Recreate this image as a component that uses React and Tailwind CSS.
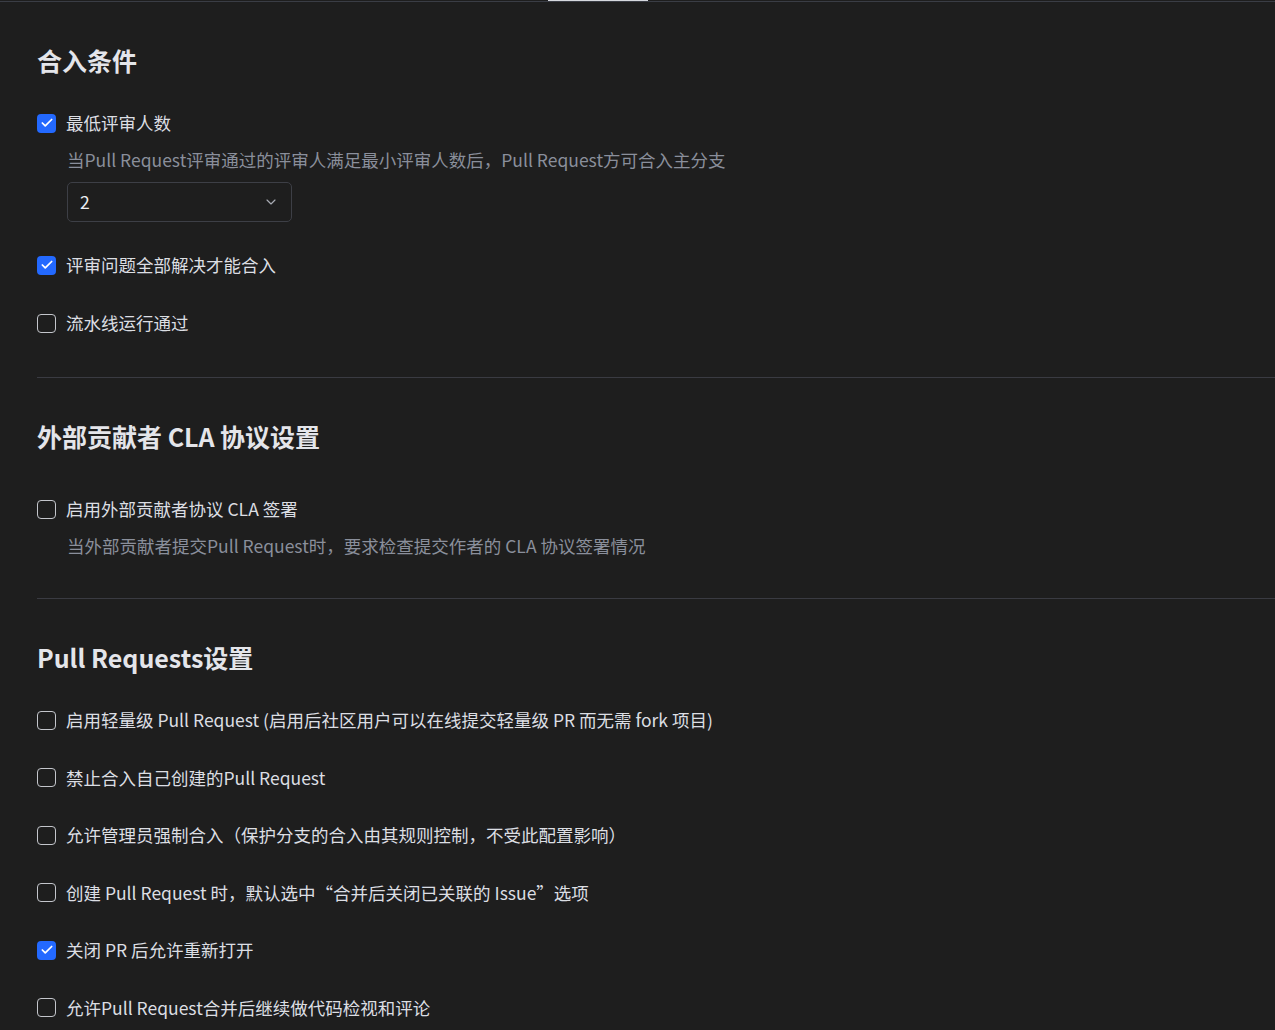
import { Check, ChevronDown } from 'lucide-react';

const font = { fontFamily: '"Noto Sans CJK SC", "Noto Sans", sans-serif' };

function Box({ checked }) {
  if (checked) {
    return (
      <span className="w-[19px] h-[19px] rounded-[4px] bg-[#2369ff] flex items-center justify-center shrink-0">
        <Check className="w-[14px] h-[14px] text-white" strokeWidth={3} />
      </span>
    );
  }
  return <span className="w-[19px] h-[19px] rounded-[4px] border-[1.5px] border-[#c4c6cc] shrink-0" />;
}

function Row({ checked, label, className = '' }) {
  return (
    <div className={`flex items-center gap-[10px] h-[26px] ${className}`}>
      <Box checked={checked} />
      <span className="text-[17.5px] leading-[26px] text-[#dcdee3]">{label}</span>
    </div>
  );
}

function Desc({ children, className = '' }) {
  return <p className={`pl-[30px] text-[17.5px] leading-[26px] text-[#8a8f9b] ${className}`}>{children}</p>;
}

function Heading({ children, className = '' }) {
  return <h2 className={`text-[25px] leading-[36px] font-bold text-[#e4e5ea] ${className}`}>{children}</h2>;
}

const prRows = [
  [false, '启用轻量级 Pull Request (启用后社区用户可以在线提交轻量级 PR 而无需 fork 项目)'],
  [false, '禁止合入自己创建的Pull Request'],
  [false, '允许管理员强制合入（保护分支的合入由其规则控制，不受此配置影响）'],
  [false, '创建 Pull Request 时，默认选中“合并后关闭已关联的 Issue”选项'],
  [true, '关闭 PR 后允许重新打开'],
  [false, '允许Pull Request合并后继续做代码检视和评论'],
];

export default function App() {
  return (
    <div className="min-h-[1030px] bg-[#1e1e1e] overflow-hidden" style={font}>
      {/* tab strip */}
      <div className="h-px w-[100px] ml-[548px] bg-[#d6d8de]" />
      <div className="h-px bg-[#3a3d45]" />

      <div className="pl-[37px]">
        {/* 合入条件 */}
        <Heading className="mt-[40px]">合入条件</Heading>
        <Row checked label="最低评审人数" className="mt-[32px]" />
        <Desc className="mt-[11px]">当Pull Request评审通过的评审人满足最小评审人数后，Pull Request方可合入主分支</Desc>
        <div className="ml-[30px] mt-[9px] w-[225px] h-[40px] rounded-[5px] border border-[#3d3f46] flex items-center justify-between pl-[12px] pr-[12px]">
          <span className="text-[17.5px] text-[#eceef2]">2</span>
          <ChevronDown className="w-[16px] h-[16px] text-[#a8abb3]" strokeWidth={1.75} />
        </div>
        <Row checked label="评审问题全部解决才能合入" className="mt-[30px]" />
        <Row label="流水线运行通过" className="mt-[32px]" />
        <div className="h-px bg-[#3a3b42] mt-[41px]" />

        {/* CLA */}
        <Heading className="mt-[40px]">外部贡献者 CLA 协议设置</Heading>
        <Row label="启用外部贡献者协议 CLA 签署" className="mt-[42px]" />
        <Desc className="mt-[11px]">当外部贡献者提交Pull Request时，要求检查提交作者的 CLA 协议签署情况</Desc>
        <div className="h-px bg-[#3a3b42] mt-[39px]" />

        {/* Pull Requests */}
        <Heading className="mt-[40px]">Pull Requests设置</Heading>
        <div className="mt-[32px] flex flex-col gap-[31.6px]">
          {prRows.map(([c, l]) => (
            <Row key={l} checked={c} label={l} />
          ))}
        </div>
      </div>
    </div>
  );
}
